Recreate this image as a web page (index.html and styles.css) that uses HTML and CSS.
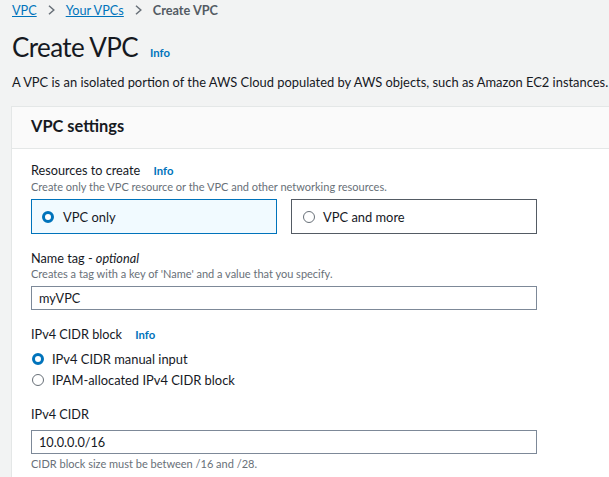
FILE: index.html
```html
<!DOCTYPE html>
<html>
<head>
<meta charset="utf-8">
<link rel="stylesheet" href="styles.css">
</head>
<body>
<div class="page">
  <nav class="crumbs">
    <a class="crumb-link">VPC</a>
    <svg class="chev" viewBox="0 0 7 10" width="7" height="10"><path d="M1 0.8 L5.8 5 L1 9.2" fill="none" stroke="#687078" stroke-width="1.5"/></svg>
    <a class="crumb-link">Your VPCs</a>
    <svg class="chev" viewBox="0 0 7 10" width="7" height="10"><path d="M1 0.8 L5.8 5 L1 9.2" fill="none" stroke="#687078" stroke-width="1.5"/></svg>
    <span class="crumb-current">Create VPC</span>
  </nav>
  <div class="title-row">
    <h1 class="title">Create VPC</h1>
    <span class="info">Info</span>
  </div>
  <p class="lead">A VPC is an isolated portion of the AWS Cloud populated by AWS objects, such as Amazon EC2 instances.</p>

  <section class="card">
    <header class="card-head"><h2>VPC settings</h2></header>
    <div class="card-body">
      <div class="field">
        <div class="label">Resources to create <span class="info">Info</span></div>
        <div class="desc">Create only the VPC resource or the VPC and other networking resources.</div>
        <div class="tiles">
          <div class="tile selected"><span class="radio on"></span>VPC only</div>
          <div class="tile"><span class="radio"></span>VPC and more</div>
        </div>
      </div>

      <div class="field">
        <div class="label">Name tag - <i>optional</i></div>
        <div class="desc">Creates a tag with a key of 'Name' and a value that you specify.</div>
        <div class="input">myVPC</div>
      </div>

      <div class="field">
        <div class="label">IPv4 CIDR block <span class="info">Info</span></div>
        <div class="radios">
          <div class="radio-row"><span class="radio on"></span>IPv4 CIDR manual input</div>
          <div class="radio-row"><span class="radio"></span>IPAM-allocated IPv4 CIDR block</div>
        </div>
      </div>

      <div class="field">
        <div class="label">IPv4 CIDR</div>
        <div class="input cidr-input">10.0.0.0/16</div>
        <div class="desc hint">CIDR block size must be between /16 and /28.</div>
      </div>
    </div>
  </section>
</div>
</body>
</html>
```

FILE: styles.css
```css
html, body {
  margin: 0;
  padding: 0;
  background: #f2f3f3;
  font-family: Lato, "Liberation Sans", sans-serif;
  color: #16191f;
}
.page {
  padding: 0 0 0 12px;
}
.crumbs {
  display: flex;
  align-items: center;
  gap: 11px;
  height: 20px;
  font-size: 12.7px;
}
.crumb-link {
  color: #0073bb;
  text-decoration: underline;
}
.crumb-current {
  color: #545b64;
  font-weight: 700;
}
.chev { display: block; }
.title-row {
  display: flex;
  align-items: baseline;
  gap: 12px;
  margin-top: 10px;
  height: 34px;
}
.title {
  margin: 0;
  font-size: 26px;
  letter-spacing: -0.6px;
  font-weight: 400;
  line-height: 34px;
}
.info {
  color: #0073bb;
  font-size: 11.3px;
  font-weight: 700;
}
.lead {
  margin: 8px 0 0 0;
  font-size: 12.9px;
  line-height: 20px;
  white-space: nowrap;
}
.card {
  margin: 14px 0 0 -1px;
  background: #fff;
  border: 1px solid #e4e7e7;
  border-right: none;
}
.card-head {
  background: #fafafa;
  border-bottom: 1px solid #e4e7e7;
  padding: 8px 19px 11px;
}
.card-head h2 {
  margin: 0;
  font-size: 16.4px;
  font-weight: 700;
  line-height: 22px;
}
.card-body {
  padding: 12px 0 10px 19px;
}
.field { margin-bottom: 15px; }
.label {
  font-size: 12.7px;
  line-height: 18px;
}
.label .info { margin-left: 10px; }
.desc {
  font-size: 11px;
  color: #687078;
  line-height: 14px;
}
.tiles {
  display: flex;
  gap: 14px;
  margin-top: 5px;
}
.tile {
  box-sizing: border-box;
  height: 35px;
  width: 246px;
  border: 1px solid #545b64;
  display: flex;
  align-items: center;
  padding-left: 10px;
  gap: 9px;
  font-size: 12.9px;
  background: #fff;
}
.tile + .tile { padding-left: 11px; gap: 8px; }
.tile.selected {
  background: #f1faff;
  border-color: #0073bb;
}
.radio {
  box-sizing: border-box;
  width: 12px;
  height: 12px;
  border-radius: 50%;
  border: 1px solid #687078;
  background: #fff;
  flex: none;
}
.radio.on {
  border: 3.5px solid #0073bb;
}
.input {
  box-sizing: border-box;
  margin-top: 5px;
  width: 506px;
  height: 24px;
  border: 1px solid #7d8998;
  padding-left: 7px;
  font-size: 12.7px;
  line-height: 22px;
  background: #fff;
}
.cidr-input { margin-top: 7px; }
.radios {
  margin-top: 4px;
}
.radio-row {
  display: flex;
  align-items: center;
  gap: 8px;
  height: 21px;
  font-size: 12.9px;
  padding-left: 1px;
}
.hint { margin-top: 3px; }
```
